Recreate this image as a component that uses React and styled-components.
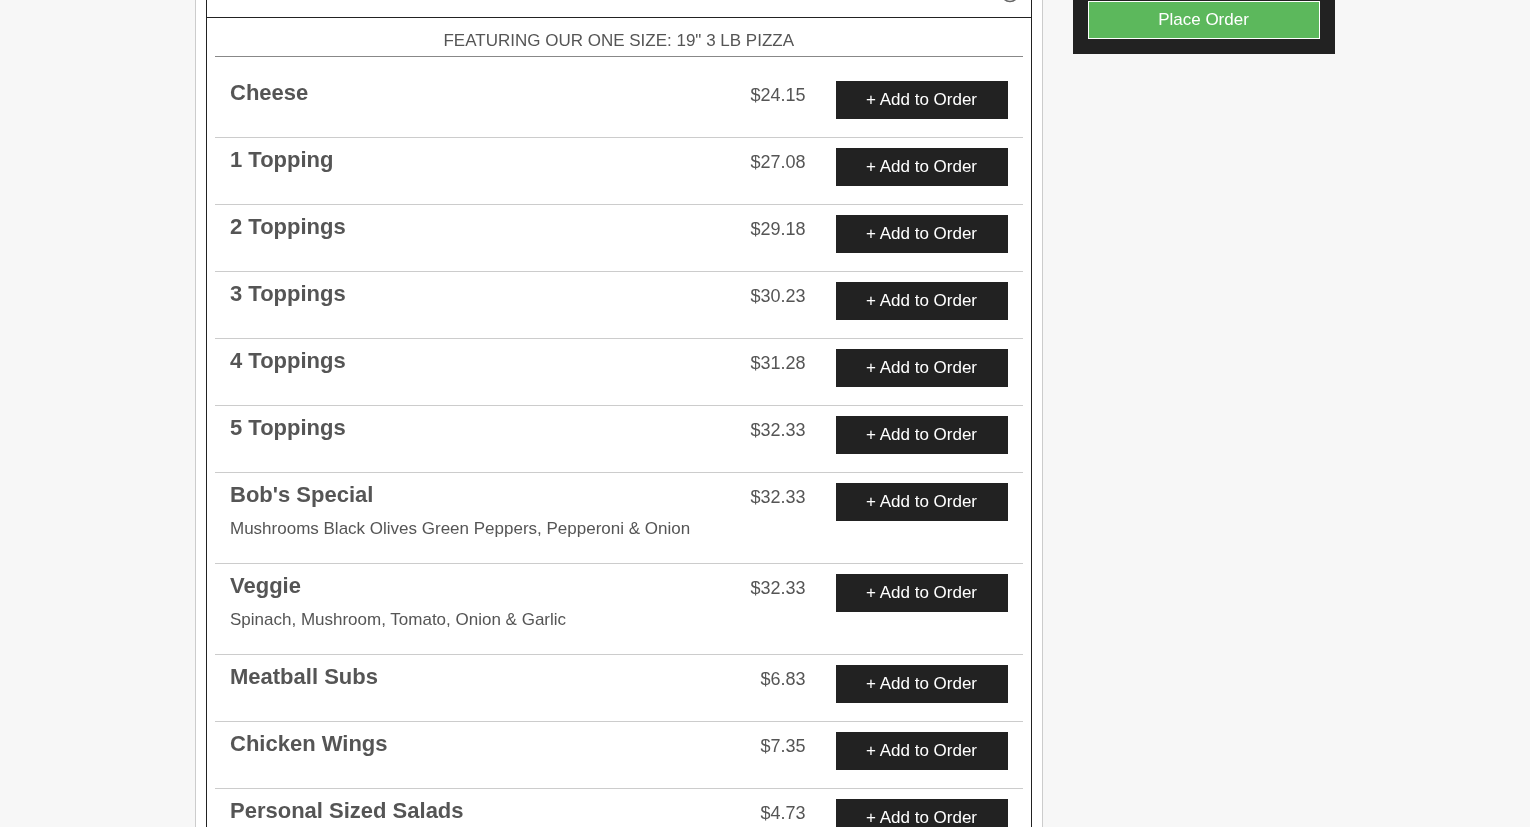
import * as React from "react";
import styled, { createGlobalStyle } from "styled-components";

const items = [
  { name: "Cheese", price: "$24.15" },
  { name: "1 Topping", price: "$27.08" },
  { name: "2 Toppings", price: "$29.18" },
  { name: "3 Toppings", price: "$30.23" },
  { name: "4 Toppings", price: "$31.28" },
  { name: "5 Toppings", price: "$32.33" },
  { name: "Bob's Special", price: "$32.33", desc: "Mushrooms Black Olives Green Peppers, Pepperoni & Onion" },
  { name: "Veggie", price: "$32.33", desc: "Spinach, Mushroom, Tomato, Onion & Garlic" },
  { name: "Meatball Subs", price: "$6.83" },
  { name: "Chicken Wings", price: "$7.35" },
  { name: "Personal Sized Salads", price: "$4.73" }
];

const Global = createGlobalStyle`
  html, body {
    margin: 0;
    height: 100%;
    overflow: hidden;
    background: #f7f7f7;
    font-family: "Liberation Sans", Arial, sans-serif;
  }
  * { box-sizing: border-box; }
`;

const App = () =>
  <Page>
    <Global />
    <Main>
      <MenuBox>
        <BoxHeader>
          <InfoIcon viewBox="0 0 20 20" width="20" height="20">
            <circle cx="10" cy="10" r="8.5" fill="none" stroke="#666" strokeWidth="1.5" />
          </InfoIcon>
        </BoxHeader>
        <BoxBody>
          <Featuring>FEATURING OUR ONE SIZE: 19" 3 LB PIZZA</Featuring>
          {items.map((item, i) =>
            <Row key={item.name} $first={i === 0}>
              <Details>
                <Name>{item.name}</Name>
                {item.desc && <Desc>{item.desc}</Desc>}
              </Details>
              <Price>{item.price}</Price>
              <AddButton>+ Add to Order</AddButton>
            </Row>
          )}
        </BoxBody>
      </MenuBox>
    </Main>
    <Sidebar>
      <OrderPanel>
        <PlaceOrder>Place Order</PlaceOrder>
      </OrderPanel>
    </Sidebar>
  </Page>;

export default App;

const Page = styled.div`
  display: flex;
  align-items: flex-start;
  height: 827px;
  overflow: hidden;
  padding-left: 195px;
  will-change: transform;
`;

const Main = styled.div`
  width: 848px;
  min-height: 827px;
  flex-shrink: 0;
  background: #fff;
  border-left: 1px solid #ccc;
  border-right: 1px solid #ccc;
  padding: 0 10px;
`;

const MenuBox = styled.div`
  border: 1px solid #222;
  border-top: none;
  width: 826px;
`;

const BoxHeader = styled.div`
  height: 18px;
  border-bottom: 1px solid #222;
  overflow: hidden;
  display: flex;
  justify-content: flex-end;
  padding-right: 11px;
`;

const InfoIcon = styled.svg`
  margin-top: -17px;
`;

const BoxBody = styled.div`
  padding: 0 8px;
`;

const Featuring = styled.div`
  height: 39px;
  line-height: 45px;
  padding-right: 0.5px;
  text-align: center;
  font-size: 17px;
  color: #555;
  border-bottom: 1px solid #888;
`;

const Row = styled.div`
  display: flex;
  align-items: flex-start;
  padding: ${p => (p.$first ? "24px" : "10px")} 15px 18px;
  border-bottom: 1px solid #ccc;
`;

const Details = styled.div`
  flex: 1;
  min-width: 0;
  color: #555;
`;

const Name = styled.div`
  font-size: 22px;
  font-weight: 700;
  line-height: 24px;
`;

const Desc = styled.div`
  font-size: 17px;
  line-height: 20px;
  margin-top: 12px;
  padding-bottom: 6px;
`;

const Price = styled.div`
  font-size: 18px;
  line-height: 20px;
  color: #555;
  margin: 4px 30.5px 0 0;
`;

const AddButton = styled.button`
  width: 172px;
  height: 38px;
  flex-shrink: 0;
  border: none;
  padding: 0 1px 0 0;
  background: #222;
  color: #fff;
  font-family: inherit;
  font-size: 17px;
`;

const Sidebar = styled.div`
  margin-left: 30px;
  width: 262px;
  flex-shrink: 0;
`;

const OrderPanel = styled.div`
  background: #222;
  padding: 1px 15px 15px;
`;

const PlaceOrder = styled.button`
  display: block;
  width: 100%;
  height: 38px;
  border: 1px solid #fff;
  padding: 0 1px 0 0;
  background: #5cb85c;
  color: #fff;
  font-family: inherit;
  font-size: 17px;
`;
